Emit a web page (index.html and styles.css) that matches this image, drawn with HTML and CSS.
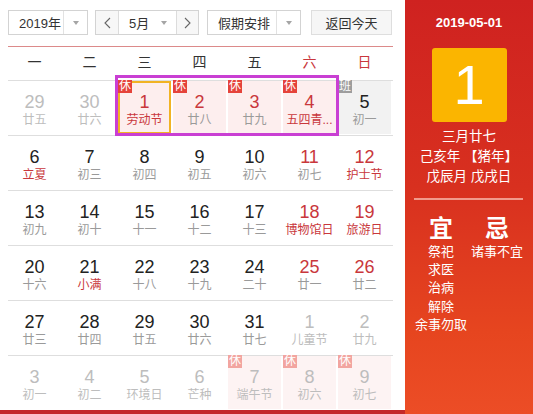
FILE: index.html
```html
<!DOCTYPE html>
<html lang="zh-CN">
<head>
<meta charset="utf-8">
<title>万年历</title>
<link rel="stylesheet" href="styles.css">
</head>
<body>
<div class="widget">
  <div class="cal">
    <div class="toolbar">
      <div class="select year"><span class="txt">2019年</span><span class="arr"><i class="caret"></i></span></div>
      <div class="select month">
        <span class="nav"><svg width="7" height="12" viewBox="0 0 7 12"><polyline points="6,1 1,6 6,11" fill="none" stroke="#666" stroke-width="1.1"/></svg></span>
        <span class="mid"><span class="txt">5月</span><i class="caret"></i></span>
        <span class="nav"><svg width="7" height="12" viewBox="0 0 7 12"><polyline points="1,1 6,6 1,11" fill="none" stroke="#666" stroke-width="1.1"/></svg></span>
      </div>
      <div class="select holiday"><span class="txt">假期安排</span><span class="arr"><i class="caret"></i></span></div>
      <button class="today-btn">返回今天</button>
    </div>

    <div class="week">
      <span>一</span><span>二</span><span>三</span><span>四</span><span>五</span><span class="we">六</span><span class="we">日</span>
    </div>

    <div class="row">
      <div class="cell other"><b>29</b><em>廿五</em></div>
      <div class="cell other"><b>30</b><em>廿六</em></div>
      <div class="cell rest today red"><i class="tag">休</i><b>1</b><em class="fest">劳动节</em></div>
      <div class="cell rest red"><i class="tag">休</i><b>2</b><em>廿八</em></div>
      <div class="cell rest red"><i class="tag">休</i><b>3</b><em>廿九</em></div>
      <div class="cell rest red"><i class="tag">休</i><b>4</b><em class="fest">五四青...</em></div>
      <div class="cell work"><i class="tag ban">班</i><b>5</b><em>初一</em></div>
    </div>

    <div class="row">
      <div class="cell"><b>6</b><em class="fest">立夏</em></div>
      <div class="cell"><b>7</b><em>初三</em></div>
      <div class="cell"><b>8</b><em>初四</em></div>
      <div class="cell"><b>9</b><em>初五</em></div>
      <div class="cell"><b>10</b><em>初六</em></div>
      <div class="cell red"><b>11</b><em>初七</em></div>
      <div class="cell red"><b>12</b><em class="fest">护士节</em></div>
    </div>

    <div class="row">
      <div class="cell"><b>13</b><em>初九</em></div>
      <div class="cell"><b>14</b><em>初十</em></div>
      <div class="cell"><b>15</b><em>十一</em></div>
      <div class="cell"><b>16</b><em>十二</em></div>
      <div class="cell"><b>17</b><em>十三</em></div>
      <div class="cell red"><b>18</b><em class="fest">博物馆日</em></div>
      <div class="cell red"><b>19</b><em class="fest">旅游日</em></div>
    </div>

    <div class="row">
      <div class="cell"><b>20</b><em>十六</em></div>
      <div class="cell"><b>21</b><em class="fest">小满</em></div>
      <div class="cell"><b>22</b><em>十八</em></div>
      <div class="cell"><b>23</b><em>十九</em></div>
      <div class="cell"><b>24</b><em>二十</em></div>
      <div class="cell red"><b>25</b><em>廿一</em></div>
      <div class="cell red"><b>26</b><em>廿二</em></div>
    </div>

    <div class="row">
      <div class="cell"><b>27</b><em>廿三</em></div>
      <div class="cell"><b>28</b><em>廿四</em></div>
      <div class="cell"><b>29</b><em>廿五</em></div>
      <div class="cell"><b>30</b><em>廿六</em></div>
      <div class="cell"><b>31</b><em>廿七</em></div>
      <div class="cell other"><b>1</b><em>儿童节</em></div>
      <div class="cell other"><b>2</b><em>廿九</em></div>
    </div>

    <div class="row">
      <div class="cell other"><b>3</b><em>初一</em></div>
      <div class="cell other"><b>4</b><em>初二</em></div>
      <div class="cell other"><b>5</b><em>环境日</em></div>
      <div class="cell other"><b>6</b><em>芒种</em></div>
      <div class="cell other rest"><i class="tag">休</i><b>7</b><em>端午节</em></div>
      <div class="cell other rest"><i class="tag">休</i><b>8</b><em>初六</em></div>
      <div class="cell other rest"><i class="tag">休</i><b>9</b><em>初七</em></div>
    </div>
  </div>

  <div class="side">
    <div class="date">2019-05-01</div>
    <div class="bigday">1</div>
    <div class="lunar">
      <div>三月廿七</div>
      <div>己亥年 【猪年】</div>
      <div>戊辰月 戊戌日</div>
    </div>
    <div class="sep"></div>
    <div class="yiji">
      <div class="col">
        <div class="head">宜</div>
        <div>祭祀</div>
        <div>求医</div>
        <div>治病</div>
        <div>解除</div>
        <div>余事勿取</div>
      </div>
      <div class="col">
        <div class="head">忌</div>
        <div>诸事不宜</div>
      </div>
    </div>
  </div>

  <div class="mark"></div>
</div>
</body>
</html>
```

FILE: styles.css
```css
* { box-sizing: border-box; }
html, body { margin: 0; padding: 0; background: #fff; }
body {
  font-family: "Liberation Sans", "Noto Sans CJK SC", sans-serif;
  color: #333;
}
.widget {
  position: relative;
  display: flex;
  width: 533px;
  height: 414px;
  overflow: hidden;
}
.cal {
  width: 405px;
  height: 414px;
  padding: 10px 12px 0 8px;
  border-bottom: 4px solid #c4282a;
}

/* toolbar */
.toolbar {
  display: flex;
  height: 25px;
  margin-bottom: 11px;
  font-size: 13px;
}
.select {
  display: flex;
  height: 25px;
  border: 1px solid #d3d3d3;
  background: #fff;
  align-items: stretch;
}
.select .txt {
  display: flex;
  align-items: center;
  flex: 1;
  padding-left: 10px;
  color: #333;
}
.select .arr {
  display: flex;
  align-items: center;
  justify-content: center;
  width: 24px;
  border-left: 1px solid #e2e2e2;
}
.caret {
  display: block;
  width: 0;
  height: 0;
  border-top: 4px solid #a5a5a5;
  border-left: 3.5px solid transparent;
  border-right: 3.5px solid transparent;
}
.year { width: 80px; }
.month { width: 104px; margin-left: 7px; }
.holiday { width: 94px; margin-left: 8px; }
.month .nav {
  display: flex;
  align-items: center;
  justify-content: center;
  width: 22px;
  background: #f7f7f7;
}
.month .nav + .mid { border-left: 1px solid #dcdcdc; }
.month .mid + .nav { border-left: 1px solid #dcdcdc; }
.month .mid {
  display: flex;
  align-items: center;
  justify-content: space-between;
  flex: 1;
  padding: 0 9px 0 10px;
  background: #fff;
}
.month .mid .txt { padding: 0; flex: none; }
.today-btn {
  width: 81px;
  height: 25px;
  margin-left: 10px;
  padding: 0;
  border: 1px solid #dedede;
  background: #f6f6f6;
  font: inherit;
  font-size: 13px;
  color: #333;
}

/* weekdays */
.week {
  display: grid;
  grid-template-columns: repeat(7, 53px);
  column-gap: 2px;
  width: 385px;
  height: 34px;
  border-top: 1px solid #dc8a8a;
  font-size: 14px;
  line-height: 31px;
  text-align: center;
  color: #333;
}
.week .we { color: #c9373c; }

/* day grid */
.row {
  display: grid;
  grid-template-columns: repeat(7, 53px);
  column-gap: 2px;
  width: 385px;
  height: 55px;
  border-top: 1px solid #dedede;
}
.cell {
  position: relative;
  height: 53px;
  padding-top: 11px;
  text-align: center;
}
.cell b {
  display: block;
  font-weight: normal;
  font-size: 18px;
  line-height: 20px;
  color: #222;
}
.cell em {
  display: block;
  font-style: normal;
  font-size: 12px;
  line-height: 16px;
  margin-top: 0;
  color: #9a9a9a;
  white-space: nowrap;
}
.cell em.fest { color: #c9373c; }
.cell.red b { color: #c9373c; }
.cell.other b, .cell.other em { color: #bdbdbd; }
.cell.rest { background: #fdeeee; }
.cell.other.rest { background: #fdf3f3; }
.cell.work { background: #f2f2f2; }
.cell.today {
  border: 2px solid #f1b324;
  padding-top: 9px;
}
.tag {
  position: absolute;
  top: -1px;
  left: 0;
  width: 14px;
  height: 13px;
  font-style: normal;
  font-size: 12px;
  line-height: 13px;
  color: #fff;
  background: #e5433b;
  text-align: center;
}
.cell.today .tag { top: -3px; left: -2px; }
.tag.ban { background: #9d9d9d; }
.cell.other .tag { background: #f2a5a0; }

/* side panel */
.side {
  width: 128px;
  height: 414px;
  padding-top: 14px;
  background: linear-gradient(180deg, #cf2220 0%, #d8301f 45%, #e6451f 80%, #ec4d26 100%);
  color: #fff;
  text-align: center;
}
.date {
  font-size: 13px;
  font-weight: bold;
  line-height: 18px;
}
.bigday {
  width: 75px;
  height: 74px;
  margin: 16px auto 0;
  background: #fbb500;
  border-radius: 3px;
  font-size: 56px;
  line-height: 74px;
  color: #fff;
}
.lunar {
  margin-top: 5px;
  font-size: 13.5px;
  line-height: 20px;
}
.sep {
  height: 2px;
  margin: 11px 10px 0 9px;
  background: #f19a8c;
}
.yiji {
  display: flex;
  padding: 0 8px;
  margin-top: 15px;
  font-size: 13px;
  line-height: 18.2px;
}
.yiji .col { width: 56px; white-space: nowrap; }
.yiji .head {
  font-size: 24px;
  line-height: 28px;
  font-weight: bold;
}

/* annotation box */
.mark {
  position: absolute;
  left: 115px;
  top: 75px;
  width: 224px;
  height: 61px;
  border: 3px solid #c93fd3;
  pointer-events: none;
}
```
